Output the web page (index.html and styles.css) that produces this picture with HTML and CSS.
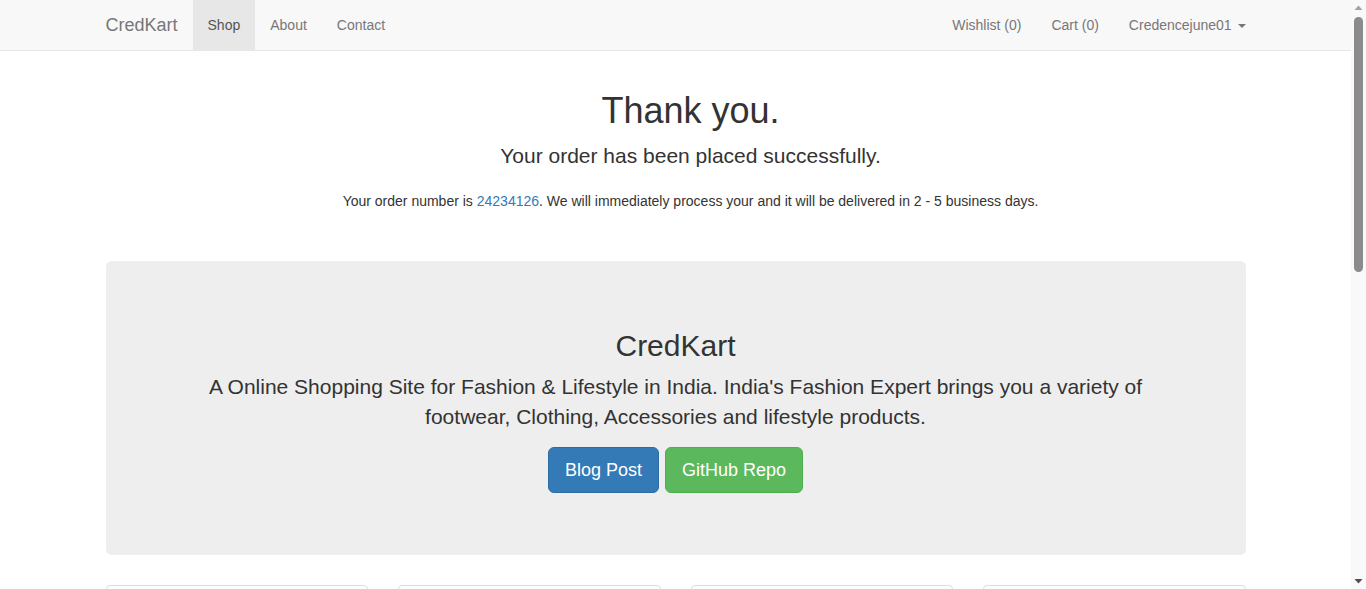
FILE: index.html
```html
<!DOCTYPE html>
<html lang="en">
<head>
<meta charset="utf-8">
<title>CredKart</title>
<link rel="stylesheet" href="styles.css">
</head>
<body>
<nav class="navbar">
  <div class="container nav-inner">
    <div class="nav-left">
      <a class="brand" href="#">CredKart</a>
      <a class="nav-link active" href="#">Shop</a>
      <a class="nav-link" href="#">About</a>
      <a class="nav-link" href="#">Contact</a>
    </div>
    <div class="nav-right">
      <a class="nav-link" href="#">Wishlist (0)</a>
      <a class="nav-link" href="#">Cart (0)</a>
      <a class="nav-link" href="#">Credencejune01 <span class="caret"></span></a>
    </div>
  </div>
</nav>

<main class="container page">
  <section class="thanks">
    <h1 class="thanks-title">Thank you.</h1>
    <p class="lead">Your order has been placed successfully.</p>
    <p class="order-line">Your order number is <a href="#" class="link">24234126</a>. We will immediately process your and it will be delivered in 2 - 5 business days.</p>
  </section>

  <section class="jumbotron">
    <h2 class="jumbo-title">CredKart</h2>
    <p class="jumbo-text">A Online Shopping Site for Fashion &amp; Lifestyle in India. India's Fashion Expert brings you a variety of footwear, Clothing, Accessories and lifestyle products.</p>
    <p class="jumbo-actions"><a class="btn btn-primary" href="#">Blog Post</a> <a class="btn btn-success" href="#">GitHub Repo</a></p>
  </section>

  <section class="products">
    <div class="thumb"><div class="thumb-img"></div></div>
    <div class="thumb"><div class="thumb-img"></div></div>
    <div class="thumb"><div class="thumb-img"></div></div>
    <div class="thumb"><div class="thumb-img"></div></div>
  </section>
</main>

<div class="scrollbar" aria-hidden="true">
  <svg class="sb-arrow sb-up" width="15" height="15" viewBox="0 0 15 15"><polygon points="3.5,10 7.5,5.5 11.5,10" fill="#a3a3a3"/></svg>
  <div class="sb-track"><div class="sb-thumb"></div></div>
  <svg class="sb-arrow sb-down" width="15" height="15" viewBox="0 0 15 15"><polygon points="3.5,5 11.5,5 7.5,9.5" fill="#505050"/></svg>
</div>
</body>
</html>
```

FILE: styles.css
```css
* { box-sizing: border-box; }
html, body { margin: 0; padding: 0; }
body {
  font-family: "Liberation Sans", Arial, Helvetica, sans-serif;
  font-size: 14px;
  line-height: 1.42857143;
  color: #333;
  background: #fff;
  padding-right: 15px;
}
a { text-decoration: none; }

.container {
  width: 1170px;
  margin: 0 auto;
  padding: 0 15px;
}
.page { display: flow-root; }

.navbar {
  height: 51px;
  background: #f8f8f8;
  border-bottom: 1px solid #e7e7e7;
  margin-bottom: 20px;
}
.nav-inner {
  display: flex;
  justify-content: space-between;
  height: 50px;
}
.nav-left, .nav-right { display: flex; height: 50px; }
.nav-left { margin-left: -15px; }
.nav-right { margin-right: -15px; }
.brand {
  font-size: 18px;
  line-height: 20px;
  padding: 15px;
  height: 50px;
  color: #777;
}
.nav-link {
  font-size: 14px;
  line-height: 20px;
  padding: 15px;
  color: #777;
  display: block;
}
.nav-link.active {
  background: #e7e7e7;
  color: #555;
}
.caret {
  display: inline-block;
  width: 0;
  height: 0;
  margin-left: 2px;
  vertical-align: middle;
  border-top: 4px solid #777;
  border-left: 4px solid transparent;
  border-right: 4px solid transparent;
}

.thanks {
  text-align: center;
  padding: 0 0 40px 30px;
}
.thanks-title {
  font-size: 36px;
  font-weight: 500;
  line-height: 1.1;
  margin: 20px 0 10px;
}
.lead {
  font-size: 21px;
  font-weight: 300;
  margin: 0 0 20px;
}
.order-line { margin: 0 0 10px; }
.link { color: #337ab7; }

.jumbotron {
  background: #eee;
  border-radius: 6px;
  padding: 48px 60px;
  margin-bottom: 30px;
  text-align: center;
}
.jumbo-title {
  font-size: 30px;
  font-weight: 500;
  line-height: 1.1;
  margin: 20px 0 10px;
}
.jumbo-text, .jumbo-actions {
  font-size: 21px;
  font-weight: 200;
  margin: 0 0 15px;
}
.jumbo-actions { margin-bottom: 14px; }
.btn {
  display: inline-block;
  font-size: 18px;
  line-height: 1.3333333;
  padding: 10px 16px;
  border-radius: 6px;
  border: 1px solid transparent;
  color: #fff;
  font-weight: 400;
  vertical-align: middle;
}
.btn-primary { background: #337ab7; border-color: #2e6da4; }
.btn-success { background: #5cb85c; border-color: #4cae4c; }

.products {
  display: grid;
  grid-template-columns: repeat(4, 1fr);
  gap: 30px;
  padding-bottom: 40px;
}
.thumb {
  border: 1px solid #ddd;
  border-radius: 4px;
  padding: 4px;
  background: #fff;
}
.thumb-img { height: 320px; }

/* simulated classic scrollbar */
.scrollbar {
  position: fixed;
  top: 0;
  right: 0;
  bottom: 0;
  width: 15px;
  background: #f9f9f9;
  display: flex;
  flex-direction: column;
}
.sb-arrow { display: block; flex: none; }
.sb-track { flex: 1; padding: 2px 0; }
.sb-thumb {
  width: 9px;
  height: 255px;
  margin-left: 3px;
  background: #8b8b8b;
  border-radius: 5px;
}
```
